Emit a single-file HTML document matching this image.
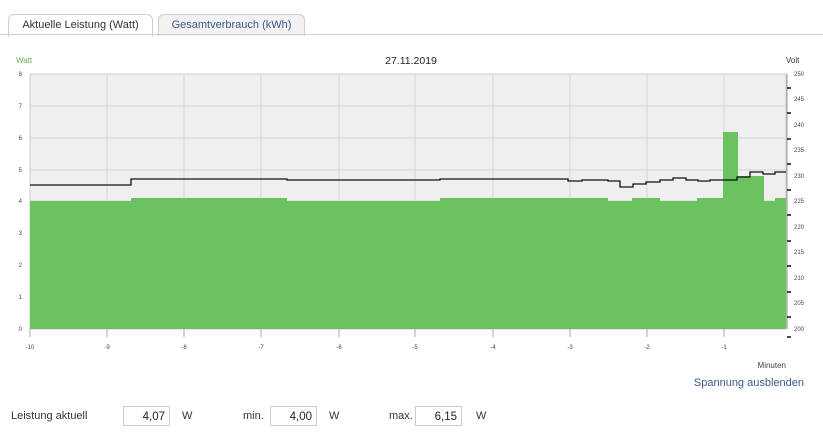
<!DOCTYPE html>
<html><head><meta charset="utf-8"><style>
body{margin:0;width:823px;height:434px;background:#fff;font-family:"Liberation Sans",sans-serif;overflow:hidden;position:relative}
.tabline{position:absolute;left:0;top:34px;width:823px;height:1px;background:#c8d0d8}
.tab{position:absolute;top:14px;height:21px;border:1px solid #c8d0d8;border-bottom:none;border-radius:6px 6px 0 0;font-size:11px;line-height:21px;text-align:center}
.t1{left:8px;width:143px;background:#fff;color:#333;height:22px}
.t2{left:158px;width:145px;background:#f2f2f2;color:#3a5a8c}
.lbl{position:absolute;font-size:11px;color:#333}
.box{position:absolute;top:406px;height:20px;border:1px solid #ccc;font-size:11.5px;line-height:20px;text-align:right;padding-right:4px;box-sizing:border-box;color:#222}
</style></head><body>
<div class="tab t1">Aktuelle Leistung (Watt)</div>
<div class="tab t2">Gesamtverbrauch (kWh)</div>
<div class="tabline"></div>
<svg width="823" height="434" style="position:absolute;left:0;top:0" font-family="Liberation Sans" >
<text x="16" y="63" font-size="8" fill="#6bb04b">Watt</text>
<text x="411" y="64" font-size="10.5" fill="#222" text-anchor="middle">27.11.2019</text>
<text x="786" y="63" font-size="8" fill="#333">Volt</text>
<rect x="30" y="74" width="756" height="255" fill="#efefef" stroke="#ccc"/>
<g stroke="#d6d6d6">
<line x1="30" y1="106" x2="786" y2="106"/><line x1="30" y1="138" x2="786" y2="138"/><line x1="30" y1="170" x2="786" y2="170"/><line x1="30" y1="201" x2="786" y2="201"/><line x1="30" y1="233" x2="786" y2="233"/><line x1="30" y1="265" x2="786" y2="265"/><line x1="30" y1="297" x2="786" y2="297"/>
<line x1="107" y1="74" x2="107" y2="329"/><line x1="184" y1="74" x2="184" y2="329"/><line x1="261" y1="74" x2="261" y2="329"/><line x1="339" y1="74" x2="339" y2="329"/><line x1="415" y1="74" x2="415" y2="329"/><line x1="493" y1="74" x2="493" y2="329"/><line x1="570" y1="74" x2="570" y2="329"/><line x1="647" y1="74" x2="647" y2="329"/><line x1="724" y1="74" x2="724" y2="329"/>
</g>
<path fill="#6cc260" d="M30 329V201H131V198H287V201H440V198H608V201H632V198H660V201H697V198H723V132H738V176H764V201H775V198H786V329Z"/>
<path fill="none" stroke="#111" stroke-width="1.3" d="M30 185H131V179H287V180H440V179H568V181H582V180H608V181H620V187H633V184H646V182H660V180H673V178H686V180H698V181H710V180H737V177H750V172H763V174H775V172H786"/>
<g font-size="6" fill="#444" text-anchor="end">
<text x="22" y="76">8</text><text x="22" y="108">7</text><text x="22" y="140">6</text><text x="22" y="172">5</text><text x="22" y="203">4</text><text x="22" y="235">3</text><text x="22" y="267">2</text><text x="22" y="299">1</text><text x="22" y="331">0</text>
</g>
<g font-size="6" fill="#444">
<text x="794" y="76">250</text><text x="794" y="101">245</text><text x="794" y="127">240</text><text x="794" y="152">235</text><text x="794" y="178">230</text><text x="794" y="203">225</text><text x="794" y="229">220</text><text x="794" y="254">215</text><text x="794" y="280">210</text><text x="794" y="305">205</text><text x="794" y="331">200</text>
</g>
<line x1="787" y1="74" x2="787" y2="329" stroke="#999"/>
<g stroke="#111" stroke-width="1.5"><line x1="787" y1="88" x2="791" y2="88"/><line x1="787" y1="113" x2="791" y2="113"/><line x1="787" y1="139" x2="791" y2="139"/><line x1="787" y1="164" x2="791" y2="164"/><line x1="787" y1="190" x2="791" y2="190"/><line x1="787" y1="215" x2="791" y2="215"/><line x1="787" y1="241" x2="791" y2="241"/><line x1="787" y1="266" x2="791" y2="266"/><line x1="787" y1="292" x2="791" y2="292"/><line x1="787" y1="317" x2="791" y2="317"/><line x1="787" y1="337" x2="791" y2="337"/></g>
<g stroke="#aaa"><line x1="30" y1="329" x2="30" y2="337"/><line x1="107" y1="329" x2="107" y2="337"/><line x1="184" y1="329" x2="184" y2="337"/><line x1="261" y1="329" x2="261" y2="337"/><line x1="339" y1="329" x2="339" y2="337"/><line x1="415" y1="329" x2="415" y2="337"/><line x1="493" y1="329" x2="493" y2="337"/><line x1="570" y1="329" x2="570" y2="337"/><line x1="647" y1="329" x2="647" y2="337"/><line x1="724" y1="329" x2="724" y2="337"/></g>
<g font-size="6" fill="#444" text-anchor="middle">
<text x="30" y="349">-10</text><text x="107" y="349">-9</text><text x="184" y="349">-8</text><text x="261" y="349">-7</text><text x="339" y="349">-6</text><text x="415" y="349">-5</text><text x="493" y="349">-4</text><text x="570" y="349">-3</text><text x="647" y="349">-2</text><text x="724" y="349">-1</text>
</g>
<text x="786" y="368" font-size="8" fill="#444" text-anchor="end">Minuten</text>
<text x="804" y="386" font-size="11" fill="#3a5a8c" text-anchor="end">Spannung ausblenden</text>
</svg>
<div class="lbl" style="left:11px;top:410px">Leistung aktuell</div>
<div class="box" style="left:123px;width:47px">4,07</div>
<div class="lbl" style="left:182px;top:410px">W</div>
<div class="lbl" style="left:243px;top:410px">min.</div>
<div class="box" style="left:270px;width:47px">4,00</div>
<div class="lbl" style="left:329px;top:410px">W</div>
<div class="lbl" style="left:389px;top:410px">max.</div>
<div class="box" style="left:415px;width:47px">6,15</div>
<div class="lbl" style="left:476px;top:410px">W</div>
</body></html>
